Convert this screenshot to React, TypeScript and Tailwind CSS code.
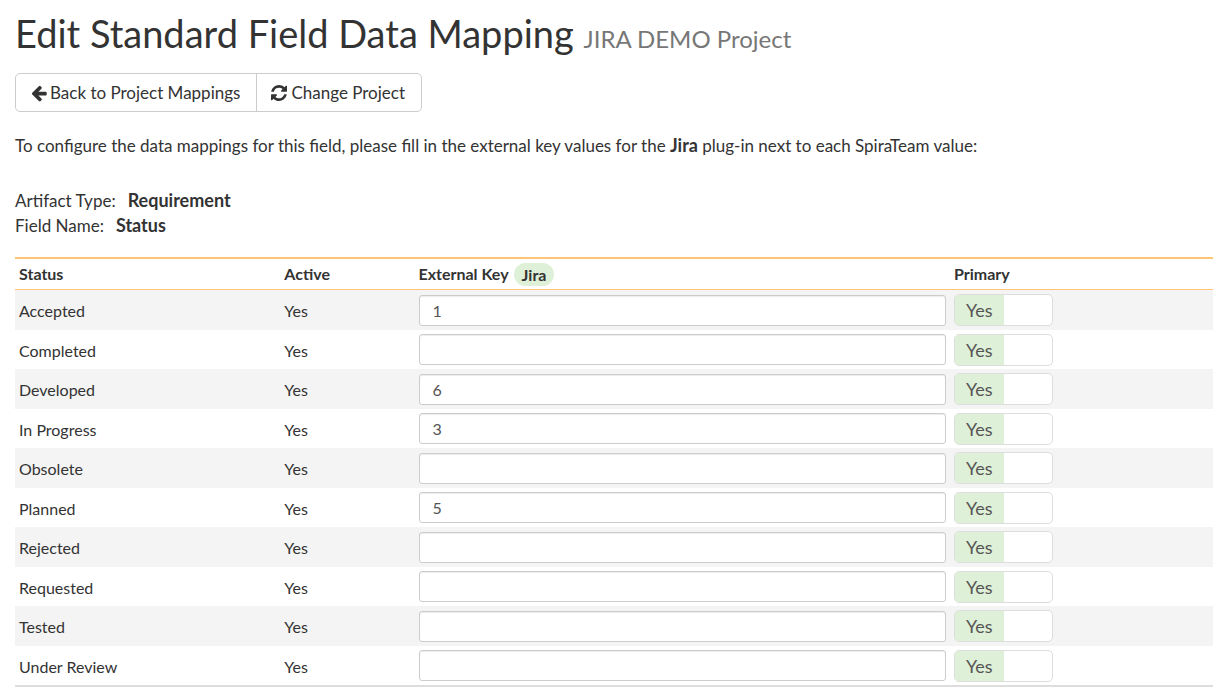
import { useState } from "react";

type Mapping = { status: string; key: string };

const mappings: Mapping[] = [
  { status: "Accepted", key: "1" },
  { status: "Completed", key: "" },
  { status: "Developed", key: "6" },
  { status: "In Progress", key: "3" },
  { status: "Obsolete", key: "" },
  { status: "Planned", key: "5" },
  { status: "Rejected", key: "" },
  { status: "Requested", key: "" },
  { status: "Tested", key: "" },
  { status: "Under Review", key: "" },
];

function ArrowLeftIcon() {
  return (
    <svg viewBox="0 0 1792 1792" className="size-[18px] shrink-0" fill="currentColor" aria-hidden="true">
      <path d="M1664 896v128q0 53-32.5 90.5t-84.5 37.5h-704l293 294q38 36 38 90t-38 90l-75 76q-37 37-90 37-52 0-91-37l-651-652q-37-37-37-90 0-52 37-91l651-650q38-38 91-38 52 0 90 38l75 74q38 38 38 91t-38 91l-293 293h704q52 0 84.5 37.5t32.5 90.5z" />
    </svg>
  );
}

function RefreshIcon() {
  return (
    <svg viewBox="0 0 1536 1536" className="size-4 shrink-0" fill="currentColor" aria-hidden="true">
      <path d="M1511 928q0 5-1 7-64 268-268 434.5t-478 166.5q-146 0-282.5-55t-243.5-157l-129 129q-19 19-45 19t-45-19-19-45v-448q0-26 19-45t45-19h448q26 0 45 19t19 45-19 45l-137 137q71 66 161 102t187 36q134 0 250-65t186-179q11-17 53-117 8-23 30-23h192q13 0 22.5 9.5t9.5 22.5zm25-800v448q0 26-19 45t-45 19h-448q-26 0-45-19t-19-45 19-45l138-138q-148-137-349-137-134 0-250 65t-186 179q-11 17-53 117-8 23-30 23h-199q-13 0-22.5-9.5t-9.5-22.5v-7q65-268 270-434.5t480-166.5q146 0 284 55.5t245 156.5l130-129q19-19 45-19t45 19 19 45z" />
    </svg>
  );
}

function PrimaryToggle({ label }: { label: string }) {
  const [on, setOn] = useState(true);
  return (
    <label className="relative flex h-8 w-[99px] cursor-pointer overflow-hidden rounded-[5px] border border-[#ddd] bg-white text-lg text-[#555]">
      <input
        type="checkbox"
        className="sr-only"
        aria-label={label}
        checked={on}
        onChange={(e) => setOn(e.target.checked)}
      />
      <span className={on ? "flex flex-1 items-center justify-center bg-[#dff0d8]" : "flex-1"}>{on ? "Yes" : ""}</span>
      <span className={on ? "flex-1" : "flex flex-1 items-center justify-center bg-[#eee]"}>{on ? "" : "No"}</span>
    </label>
  );
}

export default function App() {
  return (
    <main className="bg-white px-4 pl-[15px] pt-[11px] font-['Lato',sans-serif] text-[17px] text-[#333]">
      <h1 className="text-[38px] leading-[44px]">
        Edit Standard Field Data Mapping <small className="text-2xl text-[#777]">JIRA DEMO Project</small>
      </h1>

      <div className="mt-[18px] flex h-[39px] w-fit rounded-[5px] border border-[#ccc] bg-white">
        <a href="#mappings" className="flex items-center gap-0.5 border-r border-[#ccc] pr-4 pl-[14px]">
          <ArrowLeftIcon />
          Back to Project Mappings
        </a>
        <a href="#project" className="flex items-center gap-1 pr-4 pl-[14px]">
          <RefreshIcon />
          Change Project
        </a>
      </div>

      <p className="mt-[21px] leading-[25px]">
        To configure the data mappings for this field, please fill in the external key values for the{" "}
        <b className="text-lg leading-none">Jira</b> plug-in next to each SpiraTeam value:
      </p>

      <dl className="mt-[30px] leading-[25px]">
        <div className="flex items-baseline gap-3">
          <dt>Artifact Type:</dt>
          <dd className="text-lg leading-[25px] font-bold">Requirement</dd>
        </div>
        <div className="flex items-baseline gap-3">
          <dt>Field Name:</dt>
          <dd className="text-lg leading-[25px] font-bold">Status</dd>
        </div>
      </dl>

      <table id="mappings" className="mt-[19px] w-full table-fixed border-separate border-spacing-0 border-t-2 border-b-2 border-t-[#fdc575] border-b-[#ddd] text-left text-base">
        <colgroup>
          <col className="w-[22.15%]" />
          <col className="w-[11.2%]" />
          <col className="w-[44.7%]" />
          <col />
        </colgroup>
        <thead>
          <tr className="h-[31px] [&>th]:border-b [&>th]:border-[#fdc575] [&>th]:px-1 [&>th]:py-0">
            <th scope="col">Status</th>
            <th scope="col">Active</th>
            <th scope="col">
              <span className="flex items-center gap-[5px]">
                External Key
                <span className="rounded-full bg-[#dff0d8] px-2 leading-[23px]">Jira</span>
              </span>
            </th>
            <th scope="col">Primary</th>
          </tr>
        </thead>
        <tbody>
          {mappings.map(({ status, key }) => (
            <tr key={status} className="h-[39px] odd:h-10 odd:bg-[#f4f4f4]">
              <td className="px-1 pt-0.5">{status}</td>
              <td className="px-1 pt-0.5">Yes</td>
              <td className="px-1">
                <input
                  type="text"
                  aria-label={`External key for ${status}`}
                  defaultValue={key}
                  className="block h-[31px] w-full rounded-[3px] border border-[#ccc] bg-white px-[13px] text-base text-[#555] shadow-[inset_0_1px_1px_rgba(0,0,0,0.075)]"
                />
              </td>
              <td className="px-1">
                <PrimaryToggle label={`${status} is primary`} />
              </td>
            </tr>
          ))}
        </tbody>
      </table>
    </main>
  );
}
